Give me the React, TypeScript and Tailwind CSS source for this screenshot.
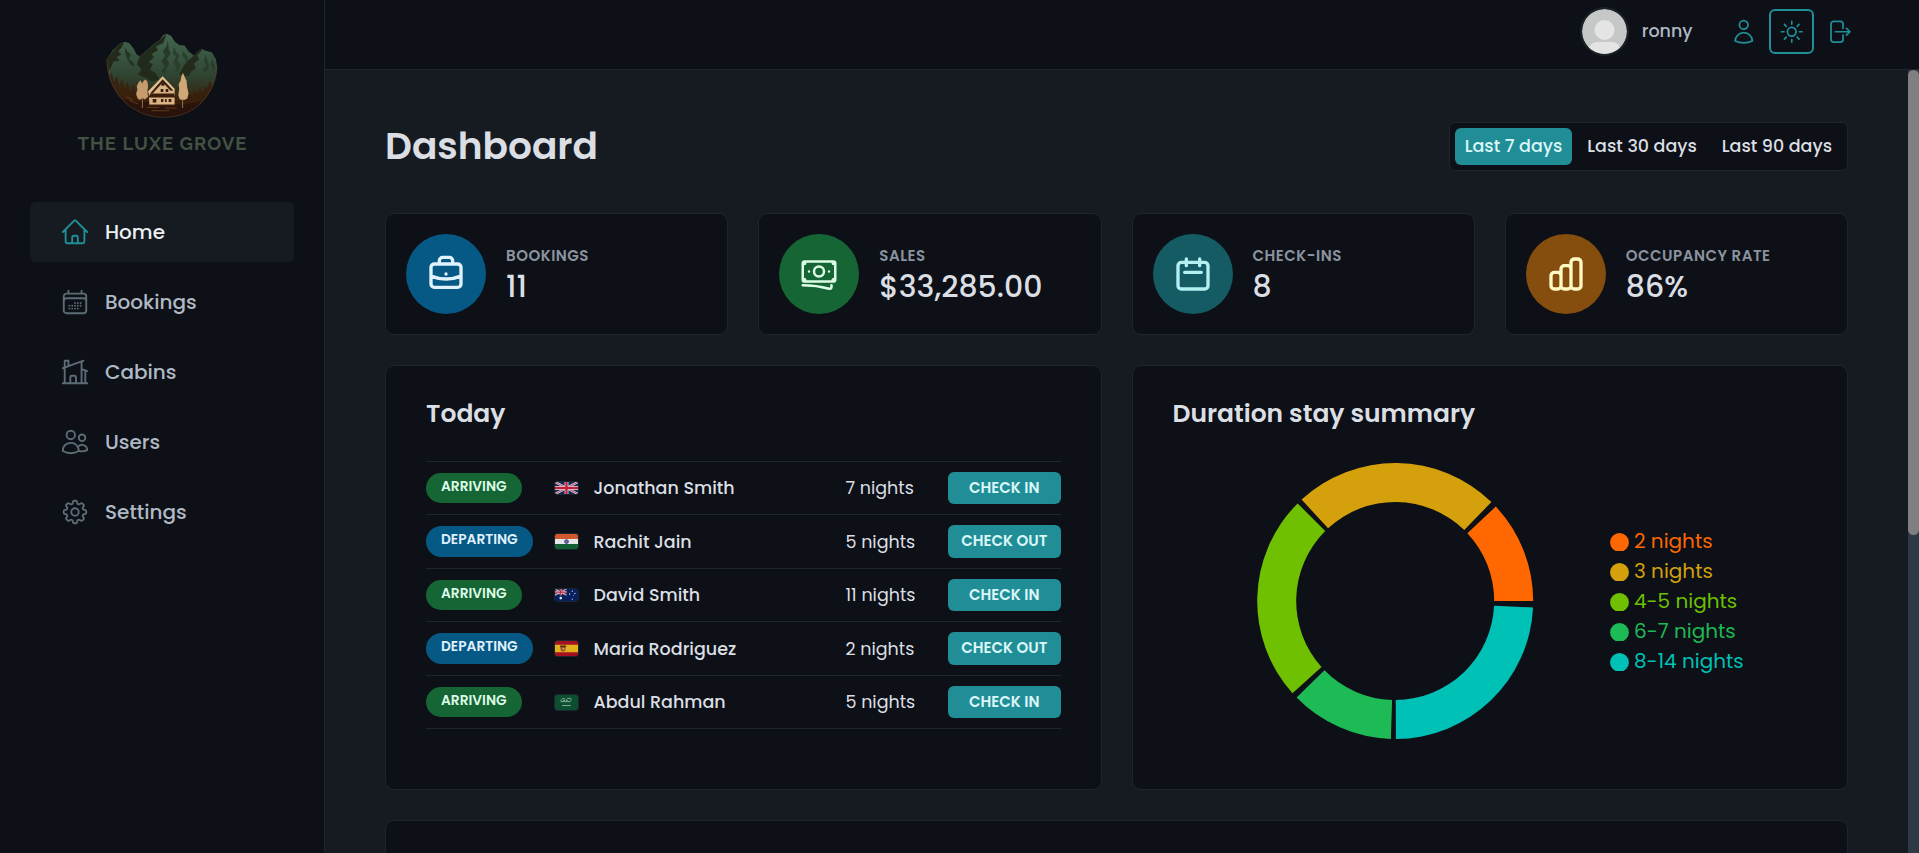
import React from 'react';
import type { ReactNode } from 'react';
import type { IconType } from 'react-icons';
import {
  HiOutlineHome,
  HiOutlineCalendarDays,
  HiOutlineHomeModern,
  HiOutlineUsers,
  HiOutlineCog8Tooth,
  HiOutlineUser,
  HiOutlineSun,
  HiOutlineArrowRightOnRectangle,
  HiOutlineBanknotes,
} from 'react-icons/hi2';
import { HiOutlineBriefcase, HiOutlineCalendar, HiOutlineChartBar } from 'react-icons/hi';

/* ---------- Sidebar ---------- */

function Logo() {
  return (
    <div className="flex flex-col items-center">
      <svg viewBox="140 40 336 256" className="h-[85px] w-[112px]" aria-hidden="true">
        <defs>
          <linearGradient id="ridge" x1="0" y1="0" x2="0" y2="1">
            <stop offset="0" stopColor="#45664f" />
            <stop offset="0.3" stopColor="#37533f" />
            <stop offset="0.52" stopColor="#2f4230" />
            <stop offset="0.68" stopColor="#33301a" />
            <stop offset="0.82" stopColor="#3a1f0c" />
            <stop offset="1" stopColor="#2c1508" />
          </linearGradient>
          <clipPath id="bowl">
            <path d="M142 118 160 92 178 74 195 66 209 70 222 86 231 104 241 110 262 92 285 72 300 62 312 46 322 42 335 48 347 66 360 76 376 78 388 96 404 108 416 96 428 88 442 94 458 98 470 118 474 140 C472 190 448 236 408 266 C378 286 345 294 312 294 C270 294 226 278 192 244 C160 212 142 168 142 118Z" />
          </clipPath>
        </defs>
        <g clipPath="url(#bowl)">
          <rect x="140" y="40" width="336" height="256" fill="url(#ridge)" />
          <path d="M142 118 178 74 195 66 186 84 176 96 186 104 172 112 180 124 162 126 156 140 150 150 140 150Z" fill="#232a1a" />
          <path d="M196 84 204 96 214 104 208 118 222 128 226 142 214 136 204 120 198 104Z" fill="#26351f" />
          <path d="M322 42 300 62 262 92 241 110 232 134 246 150 236 166 262 176 278 186 300 180 288 160 272 150 280 134 268 128 284 112 276 104 296 92 290 80 312 70Z" fill="#222b1b" />
          <path d="M326 60 322 80 310 96 318 108 306 124 316 140 306 154 316 166 322 146 330 132 322 118 334 102 328 88Z" fill="#28392a" />
          <path d="M344 82 340 100 350 112 342 128 352 146 346 160 358 152 364 136 354 122 360 108 350 96Z M372 96 368 108 380 122 376 134 388 126 384 110Z" fill="#2a3f2d" />
          <path d="M404 108 388 122 372 140 360 164 388 170 396 156 410 146 404 132 420 120 414 108 430 90 428 88 416 96Z" fill="#232c1b" />
          <path d="M440 104 434 124 442 138 430 152 440 160 450 142 446 126Z M460 118 454 134 462 146 458 158 468 148Z" fill="#2a3d2b" />
          <path d="M142 120 150 172 156 158 164 188 172 168 180 200 188 176 196 208 204 184 212 218 222 194 232 226 240 208 250 240 300 250 380 242 390 220 398 232 406 210 414 224 422 204 430 220 438 198 444 210 452 184 460 200 476 150 476 296 140 296Z" fill="#3a1d0b" opacity="0.75" />
          <path d="M192 240 C240 252 300 246 344 254 C376 258 400 252 424 244 L400 296 220 296Z" fill="#25120a" opacity="0.8" />
          <path d="M200 232 218 240 212 244 236 254 M262 264 H300 M316 266 H352 M276 274 H330" stroke="#6b4020" strokeWidth="2.5" fill="none" />
        </g>
        <path d="M142 118 C142 168 160 212 192 244 C226 278 270 294 312 294 C345 294 378 286 408 266 C448 236 472 190 474 140" stroke="#6a4a35" strokeWidth="1.8" opacity="0.8" fill="none" />
        {/* pale trees */}
        <path d="M238 188 243 182 248 192 253 184 258 180 264 186 266 200 264 216 266 232 256 240 250 236 240 242 234 236 230 224 234 210 232 200Z" fill="#c79c6c" />
        <path d="M249 234V266" stroke="#a98055" strokeWidth="2.5" />
        <path d="M371 160 377 174 382 184 384 204 388 222 384 238 374 242 362 240 357 228 360 208 358 194 364 184 366 172Z" fill="#d0a878" />
        <path d="M370 238V266" stroke="#a98055" strokeWidth="2.5" />
        {/* cabin */}
        <path d="M268 220 310 176 346 212 346 256 270 256Z" fill="#d9b384" />
        <path d="M264 218 310 170 348 210 342 212 310 182 272 222Z" fill="#e0bf90" />
        <path d="M272 222 310 179 342 213 334 214 310 189 280 222Z" fill="#3a1d0c" />
        <path d="M266 234 274 222H344L348 234Z" fill="#3a1d0c" />
        <path d="M306 190h9v9h-9z M304 209h8v9h-8z M319 209h8v9h-8z M280 239h11v10h-11z M305 239h7v9h-7z M317 239h5v9h-5z M328 239h8v9h-8z" fill="#3a1d0c" />
        <path d="M264 258H348" stroke="#3a1d0c" strokeWidth="4" />
      </svg>
      <span className="mt-[14px] whitespace-nowrap pl-px font-['Raleway',Lato,sans-serif] text-[18.5px] font-bold leading-[24px] tracking-[1.05px] text-[#435142]">
        THE LUXE GROVE
      </span>
    </div>
  );
}

const navItems: { label: string; icon: IconType; active?: boolean }[] = [
  { label: 'Home', icon: HiOutlineHome, active: true },
  { label: 'Bookings', icon: HiOutlineCalendarDays },
  { label: 'Cabins', icon: HiOutlineHomeModern },
  { label: 'Users', icon: HiOutlineUsers },
  { label: 'Settings', icon: HiOutlineCog8Tooth },
];

function Sidebar() {
  return (
    <aside className="flex w-[325px] shrink-0 flex-col border-r border-[#1d262d] bg-[#0d1017] px-[30px] pt-[33px]">
      <div className="h-[169px]">
        <Logo />
      </div>
      <nav className="flex flex-col gap-[10px]">
        {navItems.map(({ label, icon: Icon, active }) => (
          <a
            key={label}
            className={
              active
                ? 'flex h-[60px] items-center gap-[15px] rounded-[6px] bg-[#161b21] px-[30px] text-[20px] font-medium leading-[30px] text-[#eceff3]'
                : 'flex h-[60px] items-center gap-[15px] rounded-[6px] px-[30px] text-[20px] font-medium leading-[30px] text-[#b0b9c4]'
            }
          >
            <Icon className={active ? 'size-[30px] text-[#218f98]' : 'size-[30px] text-[#5d6c74]'} />
            <span>{label}</span>
          </a>
        ))}
      </nav>
    </aside>
  );
}

/* ---------- Header ---------- */

function Header() {
  return (
    <header className="flex h-[70px] shrink-0 items-center justify-end border-b border-[#1d262d] bg-[#0d1017] pb-[15px] pr-[59.5px] pt-[9px]">
      <svg viewBox="0 0 45 45" className="size-[45px] rounded-full outline-2 outline-[#1a2228]" aria-hidden="true">
        <rect width="45" height="45" fill="#c6c8c8" />
        <circle cx="22.5" cy="21" r="10" fill="#e4e4e4" />
        <rect x="7" y="33" width="31" height="20" rx="8" fill="#e4e4e4" />
      </svg>
      <span className="ml-[15px] mr-[30px] text-[17.5px] font-medium leading-[25px] text-[#b0b9c4]">ronny</span>
      <div className="flex items-center text-[#218f98]">
        <button className="mr-[4px] p-[7.5px]">
          <HiOutlineUser className="size-[27.5px]" />
        </button>
        <button className="mr-[3px] flex size-[45px] items-center justify-center rounded-[6px] border-2 border-[#218f98]">
          <HiOutlineSun className="size-[27.5px]" />
        </button>
        <button className="p-[7.5px]">
          <HiOutlineArrowRightOnRectangle className="size-[27.5px]" />
        </button>
      </div>
    </header>
  );
}

/* ---------- Dashboard ---------- */

const filters = ['Last 7 days', 'Last 30 days', 'Last 90 days'];

function Filter() {
  return (
    <div className="flex gap-[5px] rounded-[6px] border border-[#1d262d] bg-[#0d1017] p-[5px]">
      {filters.map((label, i) => (
        <button
          key={label}
          className={
            i === 0
              ? 'rounded-[6px] bg-[#218e97] px-[10px] py-[5px] text-[17.5px] font-medium leading-[27px] text-[#dbf7f7]'
              : 'rounded-[6px] px-[10px] py-[5px] text-[17.5px] font-medium leading-[27px] text-[#dbdfe4]'
          }
        >
          {label}
        </button>
      ))}
    </div>
  );
}

const stats: { label: string; value: string; icon: IconType; tone: string }[] = [
  { label: 'BOOKINGS', value: '11', icon: HiOutlineBriefcase, tone: 'bg-[#075985] text-[#e0f2fe]' },
  { label: 'SALES', value: '$33,285.00', icon: HiOutlineBanknotes, tone: 'bg-[#166534] text-[#dcfce7]' },
  { label: 'CHECK-INS', value: '8', icon: HiOutlineCalendar, tone: 'bg-[#155b64] text-[#b3f0f2]' },
  { label: 'OCCUPANCY RATE', value: '86%', icon: HiOutlineChartBar, tone: 'bg-[#854d0e] text-[#fef9c3]' },
];

function Card({ className, children }: { className: string; children?: ReactNode }) {
  return <section className={`rounded-[9px] border border-[#1d262d] bg-[#0d1017] ${className}`}>{children}</section>;
}

function Stat({ label, value, icon: Icon, tone }: (typeof stats)[number]) {
  return (
    <Card className="flex h-[122px] items-center gap-5 px-5">
      <div className={`flex size-[80px] shrink-0 items-center justify-center rounded-full ${tone}`}>
        <Icon className="size-[40px]" />
      </div>
      <div className="flex flex-col gap-[4px] pb-px">
        <h5 className="text-[15px] font-semibold leading-[22.5px] tracking-[0.5px] text-[#8a939f]">{label}</h5>
        <p className="text-[30px] font-medium leading-none text-[#dbdfe4]">{value}</p>
      </div>
    </Card>
  );
}

function UnionJack() {
  return (
    <>
      <rect width="60" height="31" fill="#14275e" />
      <path d="M0 0 60 31M60 0 0 31" stroke="#d9dbe0" strokeWidth="6" />
      <path d="M0 0 60 31M60 0 0 31" stroke="#bf1f38" strokeWidth="2" />
      <path d="M30 0V31M0 15.5H60" stroke="#e2e2e6" strokeWidth="10" />
      <path d="M30 0V31M0 15.5H60" stroke="#bf1f38" strokeWidth="6" />
    </>
  );
}

function Flag({ code }: { code: string }) {
  const wide = code === 'gb' || code === 'au';
  return (
    <svg
      viewBox={wide ? '0 0 60 31' : '0 0 60 40'}
      preserveAspectRatio="none"
      className={
        wide
          ? 'h-[14px] w-[25px] rounded-[3px] border border-[#1d262d]'
          : 'h-[17px] w-[25px] rounded-[3px] border border-[#1d262d]'
      }
      aria-hidden="true"
    >
      {code === 'gb' && <UnionJack />}
      {code === 'in' && (
        <>
          <rect width="60" height="14" fill="#d2572c" />
          <rect y="13.3" width="60" height="13.4" fill="#e6e6e6" />
          <rect y="26.7" width="60" height="13.3" fill="#136034" />
          <circle cx="30" cy="20" r="5" fill="#6a6aa8" stroke="#2c2c80" strokeWidth="2" />
        </>
      )}
      {code === 'au' && (
        <>
          <rect width="60" height="31" fill="#06205f" />
          <g transform="scale(0.5 0.52)">
            <UnionJack />
          </g>
          <g fill="#dfe3ee">
            <circle cx="15" cy="23.5" r="3.4" />
            <circle cx="45" cy="5.5" r="1.7" />
            <circle cx="38" cy="13" r="1.7" />
            <circle cx="52" cy="11.5" r="1.7" />
            <circle cx="48" cy="17" r="1.2" />
            <circle cx="45" cy="26" r="1.7" />
          </g>
        </>
      )}
      {code === 'es' && (
        <>
          <rect width="60" height="40" fill="#a51122" />
          <rect y="10" width="60" height="20" fill="#e3b11b" />
          <rect x="13" y="12" width="16" height="5" rx="2" fill="#4a2f16" />
          <rect x="15" y="16" width="12" height="11" rx="3" fill="#8f4a28" />
          <circle cx="22" cy="21" r="3" fill="#c9a37f" />
        </>
      )}
      {code === 'sa' && (
        <>
          <rect width="60" height="40" fill="#0b4f30" />
          <path d="M16 12v6h6v-5m3 0v5h5v-7m3 3v4h6l4-7M18 10h8m6-1h10" stroke="#a9c4b5" strokeWidth="2" fill="none" />
          <path d="M19 28h22" stroke="#a9c4b5" strokeWidth="2" />
        </>
      )}
    </svg>
  );
}

const today = [
  { arriving: true, flag: 'gb', name: 'Jonathan Smith', nights: 7 },
  { arriving: false, flag: 'in', name: 'Rachit Jain', nights: 5 },
  { arriving: true, flag: 'au', name: 'David Smith', nights: 11 },
  { arriving: false, flag: 'es', name: 'Maria Rodriguez', nights: 2 },
  { arriving: true, flag: 'sa', name: 'Abdul Rahman', nights: 5 },
];

function Today() {
  return (
    <Card className="col-span-2 h-[425px] px-[40px] pt-[30px]">
      <h2 className="text-[25px] font-semibold leading-[35px] text-[#dbdfe4]">Today</h2>
      <ul className="mt-[29.9px] border-t border-[#1d262d]">
        {today.map((stay) => (
          <li
            key={stay.name}
            className="grid h-[53.5px] grid-cols-[112.5px_25px_1fr_87.5px_112.5px] items-center gap-[15px] border-b border-[#1d262d] text-[17.5px] text-[#dbdfe4]"
          >
            <span
              className={
                stay.arriving
                  ? 'w-fit rounded-full bg-[#166534] px-[15px] pb-[6px] pt-[4px] text-[13.75px] font-semibold leading-[20.6px] text-[#dcfce7]'
                  : 'w-fit rounded-full bg-[#075985] px-[15px] pb-[6px] pt-[4px] text-[13.75px] font-semibold leading-[20.6px] text-[#e0f2fe]'
              }
            >
              {stay.arriving ? 'ARRIVING' : 'DEPARTING'}
            </span>
            <Flag code={stay.flag} />
            <span className="font-medium">{stay.name}</span>
            <span>{stay.nights} nights</span>
            <button className="h-[32.5px] rounded-[6px] bg-[#218e97] text-[15px] font-semibold leading-[22.5px] text-[#dbf7f7]">
              {stay.arriving ? 'CHECK IN' : 'CHECK OUT'}
            </button>
          </li>
        ))}
      </ul>
    </Card>
  );
}

const durations = [
  { label: '2 nights', color: '#ff6700', from: 0, to: 43.2 },
  { label: '3 nights', color: '#d4a10c', from: 45.8, to: 132.7 },
  { label: '4-5 nights', color: '#6fc000', from: 135, to: 221.9 },
  { label: '6-7 nights', color: '#1eba55', from: 224.4, to: 268.2 },
  { label: '8-14 nights', color: '#00c1b6', from: 270.3, to: 357.3 },
];

function arc(from: number, to: number) {
  const cx = 222.2;
  const cy = 150;
  const p = (r: number, deg: number) => {
    const a = (deg * Math.PI) / 180;
    return `${(cx + r * Math.cos(a)).toFixed(2)} ${(cy - r * Math.sin(a)).toFixed(2)}`;
  };
  return `M${p(138, from)}A138 138 0 0 0 ${p(138, to)}L${p(99, to)}A99 99 0 0 1 ${p(99, from)}Z`;
}

function Durations() {
  return (
    <Card className="col-span-2 h-[425px] px-[40px] pt-[30px]">
      <h2 className="text-[25px] font-semibold leading-[35px] text-[#dbdfe4]">Duration stay summary</h2>
      <div className="mt-[20px] flex items-center">
        <svg viewBox="0 0 437.5 300" className="h-[300px] w-[437.5px] shrink-0" aria-hidden="true">
          {durations.map((d) => (
            <path key={d.label} d={arc(d.from, d.to)} fill={d.color} />
          ))}
        </svg>
        <ul className="text-[20px] leading-[30px]">
          {durations.map((d) => (
            <li key={d.label} className="flex items-center gap-[5px]" style={{ color: d.color }}>
              <svg viewBox="0 0 19 18.3" className="mt-[2px] h-[18.3px] w-[19px]" aria-hidden="true">
                <circle cx="9.5" cy="9.4" r="9.4" fill="currentColor" />
              </svg>
              <span>{d.label}</span>
            </li>
          ))}
        </ul>
      </div>
    </Card>
  );
}

export default function App() {
  return (
    <div className="flex h-[853px] w-full overflow-hidden bg-[#161b22] font-['Poppins',Inter,sans-serif]">
      <Sidebar />
      <div className="flex min-w-0 flex-1 flex-col">
        <Header />
        <div className="flex min-h-0 flex-1">
          <main className="flex min-w-0 flex-1 flex-col overflow-hidden px-[60px] pt-[50px]">
            <div className="mb-[40.5px] flex h-[52.5px] shrink-0 items-center justify-between">
              <h1 className="text-[37.5px] font-semibold leading-[52.5px] text-[#dbdfe4]">Dashboard</h1>
              <Filter />
            </div>
            <div className="grid shrink-0 grid-cols-4 gap-[30px]">
              {stats.map((s) => (
                <Stat key={s.label} {...s} />
              ))}
              <Today />
              <Durations />
              <Card className="col-span-4 h-[400px]" />
            </div>
          </main>
          <div className="w-[11px] shrink-0 bg-[#2d3a46]">
            <div className="h-[465px] rounded-[6px] bg-[#808080]" />
          </div>
        </div>
      </div>
    </div>
  );
}
